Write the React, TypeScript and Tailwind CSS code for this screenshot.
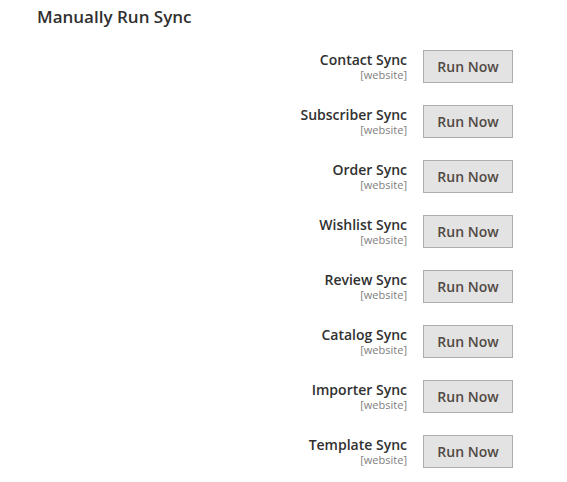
import React from "react";

const rows = [
  "Contact Sync",
  "Subscriber Sync",
  "Order Sync",
  "Wishlist Sync",
  "Review Sync",
  "Catalog Sync",
  "Importer Sync",
  "Template Sync",
];

export default function App() {
  return (
    <div
      className="w-[567px] h-[482px] bg-white text-[#303030] overflow-hidden"
      style={{ fontFamily: '"Open Sans", sans-serif' }}
    >
      <div className="pl-[37px] pt-[6px] text-[17px] leading-[22px] font-semibold text-[#303030]">
        Manually Run Sync
      </div>
      <div className="mt-[22px] flex flex-col gap-[22px]">
        {rows.map((r) => (
          <div key={r} className="flex items-start">
            <div className="w-[407px] flex flex-col items-end">
              <div className="text-[14px] leading-[19px] font-semibold text-[#303030]">{r}</div>
              <div className="text-[11px] leading-[12px] text-[#808080]">[website]</div>
            </div>
            <button className="ml-[16px] w-[90px] h-[33px] border border-[#adadad] bg-[#e3e3e3] text-[#514943] text-[14px] font-semibold leading-none flex items-center justify-center">
              Run Now
            </button>
          </div>
        ))}
      </div>
    </div>
  );
}
